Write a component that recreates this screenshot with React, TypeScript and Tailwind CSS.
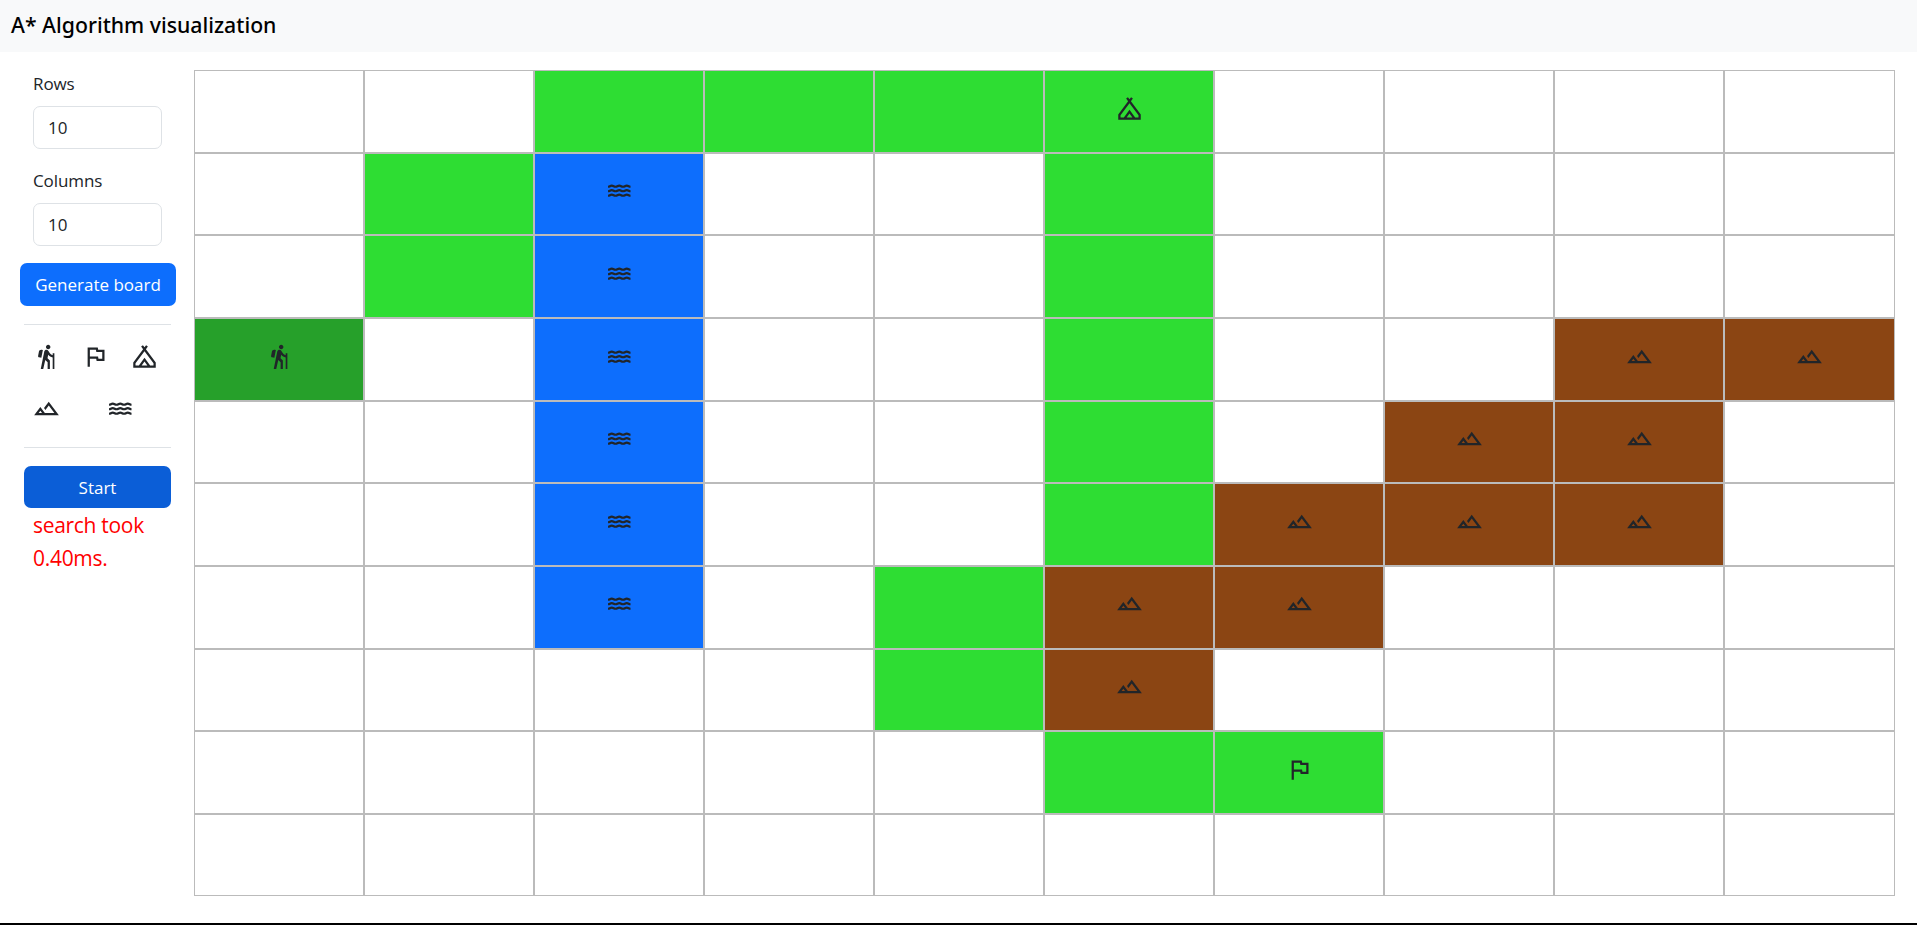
import type { ReactNode } from "react";

type Kind = "hiker" | "flag" | "camp" | "mountain" | "water";

const shapes: Record<Kind, ReactNode> = {
  hiker: (
    <path d="M13.5 5.5c1.1 0 2-.9 2-2s-.9-2-2-2-2 .9-2 2 .9 2 2 2zM17.5 10.78c-1.23-.37-2.22-1.17-2.8-2.18l-1-1.6c-.41-.65-1.11-1-1.84-1-.78 0-1.59.5-1.78 1.44S7 23 7 23h2.1l1.8-8 2.1 2v6h2v-7.5l-2.1-2 .6-3c1 1.15 2.41 2.01 4 2.34V23H19V9h-1.5v1.78zM7.43 13.13l-2.12-.41c-.54-.11-.9-.63-.79-1.17l.76-3.93c.21-1.08 1.26-1.79 2.34-1.58l1.16.23-1.35 6.86z" />
  ),
  flag: <path d="M5 21V4h9l.4 2H20v10h-7l-.4-2H7v7H5zm9.65-7H18V8h-5.25l-.4-2H7v6h7.25l.4 2z" />,
  camp: (
    <path d="M2 22v-4.65L10.75 5.55 9 3.2 10.6 2 12 3.88 13.4 2 15 3.2l-1.75 2.35L22 17.35V22H2zM12 7.23 4 18v2h3l5-7 5 7h3v-2L12 7.23zM9.45 20h5.1L12 16.45 9.45 20z" />
  ),
  mountain: (
    <path d="M14 6l-4.22 5.63 1.25 1.67L14 9.33 19 16h-8.46l-4.01-5.37L1 18h22L14 6zM5 16l1.52-2.03L8.04 16H5z" />
  ),
  water: (
    <g fill="none" stroke="currentColor" strokeWidth="1.9">
      {[8.2, 12.2, 16.2].map((y) => (
        <path
          key={y}
          d={`M1.8 ${y + 0.5}c1.67 0 1.67-1 3.33-1s1.67 1 3.34 1 1.66-1 3.33-1 1.67 1 3.33 1 1.67-1 3.34-1 1.66 1 3.33 1`}
        />
      ))}
    </g>
  ),
};

function Icon({ kind }: { kind: Kind }) {
  return (
    <svg viewBox="0 0 24 24" className="size-[27px] shrink-0 fill-current text-[#212529]">
      {shapes[kind]}
    </svg>
  );
}

const board = [
  "..pppC....",
  ".pw..p....",
  ".pw..p....",
  "H.w..p..mm",
  "..w..p.mm.",
  "..w..pmmm.",
  "..w.pmm...",
  "....pm....",
  ".....pF...",
  "..........",
];

const cells: Record<string, { color: string; kind?: Kind }> = {
  ".": { color: "bg-white" },
  p: { color: "bg-[#2edd33]" },
  C: { color: "bg-[#2edd33]", kind: "camp" },
  F: { color: "bg-[#2edd33]", kind: "flag" },
  H: { color: "bg-[#26a02a]", kind: "hiker" },
  w: { color: "bg-[#0d6efd]", kind: "water" },
  m: { color: "bg-[#8b4513]", kind: "mountain" },
};

function Field({ label }: { label: string }) {
  return (
    <label className="flex flex-col gap-[9px] px-[9px]">
      <span className="h-[27px] text-[17px] leading-[27px] tracking-[-0.1px]">{label}</span>
      <input
        defaultValue="10"
        className="h-[43px] w-[129px] rounded-[7px] border border-[#dee2e6] bg-white px-[14px] text-[17px] outline-none"
      />
    </label>
  );
}

export default function App() {
  return (
    <div className="flex h-[925px] flex-col border-b-2 border-black bg-white font-['Open_Sans','Noto_Sans',sans-serif] text-[#212529]">
      <header className="flex h-[52px] shrink-0 items-center bg-[#f8f9fa] pb-[2px] pl-[11px]">
        <h1 className="font-['Noto_Sans',sans-serif] text-[21.25px] leading-none font-medium text-black">
          A* Algorithm visualization
        </h1>
      </header>
      <div className="flex">
        <aside className="flex w-[194px] shrink-0 flex-col pt-[18px] pr-[23px] pl-6">
          <Field label="Rows" />
          <div className="h-[18px]" />
          <Field label="Columns" />
          <button className="mt-[17px] -ml-1 h-[43px] w-[156px] shrink-0 rounded-[7px] bg-[#0d6efd] text-[17px] whitespace-nowrap text-white">
            Generate board
          </button>
          <div className="mt-[18px] flex h-[124px] flex-col gap-[25px] border-y border-[#dee2e6] pt-[18px]">
            <div className="flex gap-[22px] pl-[9px]">
              <Icon kind="hiker" />
              <Icon kind="flag" />
              <Icon kind="camp" />
            </div>
            <div className="flex gap-[47px] pl-[9px]">
              <Icon kind="mountain" />
              <Icon kind="water" />
            </div>
          </div>
          <button className="mt-[18px] h-[42px] rounded-[7px] bg-[#0b5ed7] pt-px text-[17px] text-white">Start</button>
          <p className="mt-px pl-[9px] text-[21px] leading-[33px] tracking-[-0.3px] text-[#ff0000]">
            search took
            <br />
            0.40ms.
          </p>
        </aside>
        <main className="mt-[18.25px] grid h-[826.1px] w-[1700.5px] grid-cols-10 grid-rows-10">
          {board.flatMap((row, r) =>
            row.split("").map((c, i) => {
              const { color, kind } = cells[c];
              return (
                <div
                  key={`${r}-${i}`}
                  className={`flex min-h-0 items-center justify-center border border-[#bbbbbb] pb-[6.6px] ${color}`}
                >
                  {kind && <Icon kind={kind} />}
                </div>
              );
            }),
          )}
        </main>
      </div>
    </div>
  );
}
